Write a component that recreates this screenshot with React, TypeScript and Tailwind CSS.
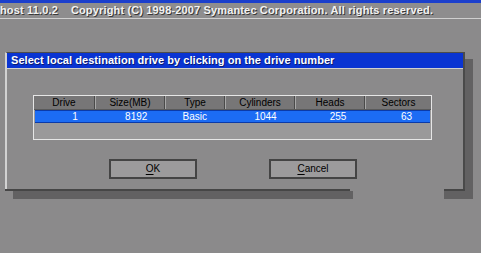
import React from 'react';

const columns = [
    { label: 'Drive', value: '1', width: 'w-[61px]' },
    { label: 'Size(MB)', value: '8192', width: 'w-[70px]' },
    { label: 'Type', value: 'Basic', width: 'w-[60px]' },
    { label: 'Cylinders', value: '1044', width: 'w-[70px]' },
    { label: 'Heads', value: '255', width: 'w-[70px]' },
    { label: 'Sectors', value: '63', width: 'w-[66px]' },
];

const GhostButton: React.FC<{ hot: string; rest: string }> = ({ hot, rest }) => (
    <button className="w-[88px] h-[20px] border-2 border-[#444444] bg-[#9c9b9c] text-[10px] text-black flex items-center justify-center leading-none">
        <span>
            <span className="underline underline-offset-2">{hot}</span>
            {rest}
        </span>
    </button>
);

const App: React.FC = () => {
    return (
        <div className="w-[481px] h-[253px] bg-[#8b8a8b] overflow-hidden font-['Liberation_Sans',sans-serif]">
            {/* top banner */}
            <div className="h-[3px] bg-[#1b3fcc]" />
            <div className="h-[16px] bg-[#8e8d8e] border-b border-[#cfcfcf] flex items-center text-[11px] font-bold text-[#f2f2f2] tracking-[0.15px] [text-shadow:1px_1px_0_#3a3a3a] whitespace-nowrap">
                <span>host 11.0.2</span>
                <span className="ml-[13px]">Copyright (C) 1998-2007 Symantec Corporation. All rights reserved.</span>
            </div>

            {/* dialog */}
            <div className="ml-[5px] mt-[33px] flex">
                <div className="w-[460px] flex flex-col">
                    <div className="h-[137px] border-t border-t-[#4c4c4c] border-l-2 border-l-[#d2d2d2] border-r-2 border-r-[#4a4a4a] flex flex-col">
                        <div className="h-[15px] bg-[#0a34d2] border-b border-[#d0d0d0] box-content flex items-center pl-[4px] text-[11px] font-bold text-white tracking-[0.05px] [text-shadow:1px_1px_0_#0a1c70] whitespace-nowrap">
                            Select local destination drive by clicking on the drive number
                        </div>

                        <div className="ml-[26px] mt-[26px] w-[399px] h-[45px] border border-[#e6e6e6] bg-[#9a999a] flex flex-col">
                            <div className="h-[14px] bg-[#777677] flex border-b border-[#5a5a5a]">
                                {columns.map((c, i) => (
                                    <div
                                        key={c.label}
                                        className={`${c.width} h-full flex items-center justify-center text-[10px] text-black ${i < columns.length - 1 ? 'border-r border-r-[#4a4a4a]' : ''} ${i > 0 ? 'border-l border-l-[#a8a8a8]' : ''}`}
                                    >
                                        {c.label}
                                    </div>
                                ))}
                            </div>
                            <div className="h-[13px] mx-[1px] bg-[#1c6cf4] border-y border-[#0b3aa8] flex">
                                {columns.map((c) => (
                                    <div
                                        key={c.label}
                                        className={`${c.width} h-full flex items-center justify-end pr-[18px] text-[10px] text-white`}
                                    >
                                        {c.value}
                                    </div>
                                ))}
                            </div>
                        </div>

                        <div className="mt-[19px] ml-[102px] flex gap-[72px]">
                            <GhostButton hot="O" rest="K" />
                            <GhostButton hot="C" rest="ancel" />
                        </div>
                    </div>
                    <div className="h-[2px] flex">
                        <div className="w-[345px] bg-[#464646]" />
                        <div className="flex-1" />
                        <div className="w-[21px] bg-[#464646]" />
                    </div>
                    <div className="h-[8px] flex">
                        <div className="ml-[8px] w-[340px] bg-[#626162]" />
                        <div className="flex-1" />
                        <div className="w-[21px] bg-[#626162]" />
                    </div>
                </div>
                <div className="w-[8px] mt-[7px] h-[140px] bg-[#626162]" />
            </div>
        </div>
    );
};

export default App;
